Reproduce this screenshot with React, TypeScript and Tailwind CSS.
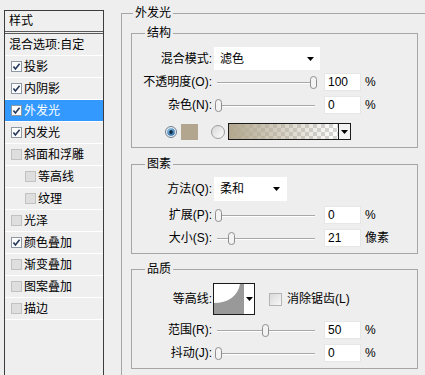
import React from 'react';

const line = 'border-[#a6a6a6]';

function Check({ on }: { on: boolean }) {
  return (
    <svg width="11" height="11" viewBox="0 0 11 11" className="shrink-0">
      <rect x="0.5" y="0.5" width="10" height="10" fill={on ? '#fdfdfd' : '#dedede'} stroke={on ? '#8c98a4' : '#c2c2c2'} />
      {on && <path d="M2.4 5.4 L4.4 7.9 L8.6 2.7" fill="none" stroke="#263a5c" strokeWidth="1.6" />}
    </svg>
  );
}

function StyleRow({ label, on, indent, active }: { label: string; on: boolean; indent?: boolean; active?: boolean }) {
  return (
    <div
      className={`flex h-[22px] items-center border-b border-white ${indent ? 'pl-[20px]' : 'pl-[6px]'} ${
        active ? 'bg-[#3399ff] text-white' : ''
      }`}
    >
      <Check on={on} />
      <span className="ml-[2px]">{label}</span>
    </div>
  );
}

function GroupHead({ title, lead }: { title: string; lead: string }) {
  return (
    <div className="flex h-[16px]">
      <div className={`${lead} h-[8px] self-end border-l border-t ${line}`} />
      <span className="px-[2px] leading-[16px]">{title}</span>
      <div className={`h-[8px] flex-1 self-end border-r border-t ${line}`} />
    </div>
  );
}

function Label({ children }: { children: React.ReactNode }) {
  return <div className="w-[80px] shrink-0 text-right">{children}</div>;
}

function Arrow() {
  return (
    <svg width="7" height="4" viewBox="0 0 7 4" className="shrink-0">
      <path d="M0 0H7L3.5 4Z" fill="#000" />
    </svg>
  );
}

function Thumb({ left }: { left: number }) {
  return (
    <svg width="9" height="13" viewBox="0 0 9 13" className="absolute top-[2px]" style={{ left }}>
      <path d="M1.5 3.5 Q1.5 0.5 4.5 0.5 Q7.5 0.5 7.5 3.5 V10 Q7.5 12.5 4.5 12.5 Q1.5 12.5 1.5 10 Z" fill="#f3f3f3" stroke="#8e8e8e" />
    </svg>
  );
}

function SliderRow({ label, thumb, value, unit, className = '' }: { label: string; thumb: number; value: string; unit: string; className?: string }) {
  return (
    <div className={`flex h-[23px] items-center ${className}`}>
      <Label>{label}</Label>
      <div className="relative ml-[2px] h-[16px] w-[104px] shrink-0">
        <div className="absolute left-[3px] right-[3px] top-[8px] h-px bg-[#a8a8a8] shadow-[0_1px_0_#ffffff]" />
        <Thumb left={thumb} />
      </div>
      <div className="ml-[6px] flex h-[18px] w-[37px] items-center border border-[#e6e6e6] bg-white pl-[3px]">{value}</div>
      <span className="ml-[4px]">{unit}</span>
    </div>
  );
}

function Radio({ on }: { on: boolean }) {
  return on ? (
    <svg width="12" height="12" viewBox="0 0 12 12" className="shrink-0">
      <defs>
        <radialGradient id="rb" cx="40%" cy="35%" r="65%">
          <stop offset="0" stopColor="#a8d8f6" />
          <stop offset="1" stopColor="#2767a0" />
        </radialGradient>
      </defs>
      <circle cx="6" cy="6" r="5.5" fill="#e6edf3" stroke="#6f8090" />
      <circle cx="6" cy="6" r="3.8" fill="url(#rb)" />
      <circle cx="6" cy="6" r="1.9" fill="#0d2b47" />
    </svg>
  ) : (
    <svg width="14" height="14" viewBox="0 0 14 14" className="shrink-0">
      <defs>
        <linearGradient id="rg" x1="0" y1="0" x2="1" y2="1">
          <stop offset="0" stopColor="#d6d6d6" />
          <stop offset="1" stopColor="#ffffff" />
        </linearGradient>
      </defs>
      <circle cx="7" cy="7" r="6.5" fill="url(#rg)" stroke="#9c9c9c" />
    </svg>
  );
}

export default function App() {
  return (
    <div className="flex h-[375px] w-[425px] items-start overflow-hidden bg-[#eeeeee] font-['Liberation_Sans','Noto_Sans_CJK_SC',sans-serif] text-[12px] text-black">
      {/* style list */}
      <div className="ml-[4px] mt-[10px] h-[380px] w-[100px] shrink-0 border border-[#3c3c3c] bg-[#efefef]">
        <div className="flex h-[20px] items-center pl-[4px]">样式</div>
        <div className="h-[3px] border-y border-[#5a5a5a]" />
        <div className="flex h-[22px] items-center border-b border-white pl-[4px]">混合选项:自定</div>
        <StyleRow label="投影" on />
        <StyleRow label="内阴影" on />
        <StyleRow label="外发光" on active />
        <StyleRow label="内发光" on />
        <StyleRow label="斜面和浮雕" on={false} />
        <StyleRow label="等高线" on={false} indent />
        <StyleRow label="纹理" on={false} indent />
        <StyleRow label="光泽" on={false} />
        <StyleRow label="颜色叠加" on />
        <StyleRow label="渐变叠加" on={false} />
        <StyleRow label="图案叠加" on={false} />
        <StyleRow label="描边" on={false} />
      </div>

      {/* outer glow settings */}
      <div className="ml-[17px] mt-[5px] w-[320px] shrink-0">
        <GroupHead title="外发光" lead="w-[12px]" />
        <div className={`h-[400px] border-x ${line} pl-[9px] pt-[4px]`}>
          {/* 结构 */}
          <div className="w-[287px]">
            <GroupHead title="结构" lead="w-[14px]" />
            <div className={`border-x border-b ${line} pb-[7px] pt-[6px]`}>
              <div className="flex h-[23px] items-center">
                <Label>混合模式:</Label>
                <div className="ml-[2px] flex h-[23px] w-[106px] items-center justify-between bg-white pl-[6px] pr-[6px]">
                  <span>滤色</span>
                  <Arrow />
                </div>
              </div>
              <SliderRow label="不透明度(O):" thumb={95} value="100" unit="%" />
              <SliderRow label="杂色(N):" thumb={0} value="0" unit="%" />
              <div className="mt-[7px] flex h-[17px] items-center pl-[33px]">
                <Radio on />
                <div className="ml-[4px] h-[16px] w-[17px] bg-[#b2a78e]" />
                <div className="ml-[13px]">
                  <Radio on={false} />
                </div>
                <div className="ml-[3px] flex h-[17px] w-[123px] border border-[#1a1a1a]">
                  <div className="flex-1 bg-[image:linear-gradient(to_right,#b2a78e,#b2a78e00),repeating-conic-gradient(#d6d6d6_0%_25%,#ffffff_0%_50%)] bg-[length:100%_100%,8px_8px]" />
                  <div className="flex w-[12px] items-center justify-center border-l border-[#1a1a1a] bg-[#f2f2f2]">
                    <Arrow />
                  </div>
                </div>
              </div>
            </div>
          </div>

          {/* 图素 */}
          <div className="mt-[8px] w-[287px]">
            <GroupHead title="图素" lead="w-[14px]" />
            <div className={`border-x border-b ${line} pb-[4px] pt-[5px]`}>
              <div className="flex h-[24px] items-center">
                <Label>方法(Q):</Label>
                <div className="ml-[2px] flex h-[24px] w-[73px] items-center justify-between bg-white pl-[6px] pr-[7px]">
                  <span>柔和</span>
                  <Arrow />
                </div>
              </div>
              <SliderRow label="扩展(P):" thumb={0} value="0" unit="%" className="mt-[2px]" />
              <SliderRow label="大小(S):" thumb={13} value="21" unit="像素" />
            </div>
          </div>

          {/* 品质 */}
          <div className="mt-[7px] w-[287px]">
            <GroupHead title="品质" lead="w-[14px]" />
            <div className={`border-x border-b ${line} pb-[4px] pt-[6px]`}>
              <div className="flex h-[32px] items-center">
                <Label>等高线:</Label>
                <div className="ml-[1px] flex h-[32px] w-[42px] border border-[#1a1a1a] bg-white">
                  <svg width="30" height="30" viewBox="0 0 30 30" className="shrink-0">
                    <path d="M0 30 L0 19 C14 19 24 12 26 0 L30 0 L30 30 Z" fill="#999999" />
                  </svg>
                  <div className="flex flex-1 items-center justify-center">
                    <Arrow />
                  </div>
                </div>
                <div className="ml-[14px] h-[13px] w-[13px] border border-[#b4b4b4] bg-[linear-gradient(135deg,#d9d9d9,#f7f7f7)]" />
                <span className="ml-[5px]">消除锯齿(L)</span>
              </div>
              <SliderRow label="范围(R):" thumb={47} value="50" unit="%" className="mt-[3px]" />
              <SliderRow label="抖动(J):" thumb={0} value="0" unit="%" />
            </div>
          </div>
        </div>
      </div>
    </div>
  );
}
